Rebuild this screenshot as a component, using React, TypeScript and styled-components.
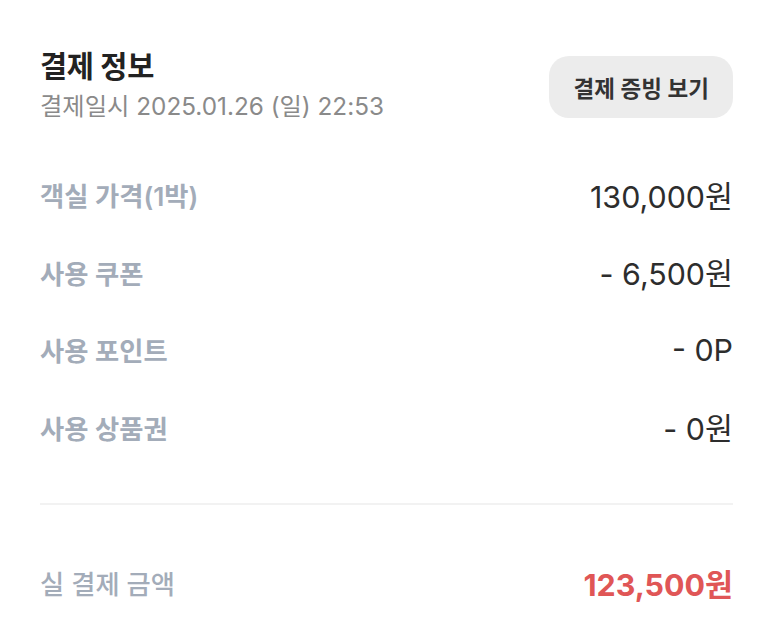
import React from "react";
import styled, { createGlobalStyle } from "styled-components";

const Global = createGlobalStyle`
  html, body { margin: 0; padding: 0; background: #ffffff; }
  body { font-family: "Inter", "Noto Sans CJK KR", sans-serif; -webkit-font-smoothing: antialiased; }
`;

const Page = styled.div`
  width: 773px;
  padding: 46px 40px 0 40px;
  box-sizing: border-box;
`;

const Header = styled.div`
  display: flex;
  align-items: flex-end;
  justify-content: space-between;
`;

const TitleBlock = styled.div`
  display: flex;
  flex-direction: column;
  gap: 5px;
`;

const Title = styled.h1`
  margin: 0;
  font-size: 29.5px;
  line-height: 40px;
  font-weight: 700;
  color: #222222;
  letter-spacing: -0.3px;
`;

const Sub = styled.div`
  font-size: 24.3px;
  line-height: 30px;
  color: #8a8a8a;
  font-weight: 400;
`;

const ProofButton = styled.button`
  height: 62px;
  margin-bottom: 3px;
  padding: 0 24px;
  border: none;
  border-radius: 20px;
  background: #ececec;
  color: #333333;
  font-family: inherit;
  font-size: 22.5px;
  font-weight: 600;
  cursor: pointer;
`;

const List = styled.div`
  display: flex;
  flex-direction: column;
  margin-top: 35px;
`;

const Row = styled.div`
  display: flex;
  align-items: center;
  justify-content: space-between;
  height: 77.5px;
`;

const Label = styled.span<{ $light?: boolean }>`
  font-size: 26.3px;
  font-weight: ${(p) => (p.$light ? 500 : 600)};
  color: #a3acb9;
`;

const Value = styled.span<{ $accent?: boolean }>`
  font-size: 30.4px;
  font-weight: ${(p) => (p.$accent ? 700 : 400)};
  color: ${(p) => (p.$accent ? "#e05656" : "#2d2d2d")};
`;

const Divider = styled.hr`
  border: none;
  height: 2px;
  background: #f2f2f2;
  margin: 37px 0 39px 0;
`;

const rows = [
  { label: "객실 가격(1박)", value: "130,000원" },
  { label: "사용 쿠폰", value: "- 6,500원" },
  { label: "사용 포인트", value: "- 0P" },
  { label: "사용 상품권", value: "- 0원" },
];

export default function App() {
  return (
    <Page>
      <Global />
      <Header>
        <TitleBlock>
          <Title>결제 정보</Title>
          <Sub>결제일시 2025.01.26 (일) 22:53</Sub>
        </TitleBlock>
        <ProofButton>결제 증빙 보기</ProofButton>
      </Header>
      <List>
        {rows.map((r) => (
          <Row key={r.label}>
            <Label>{r.label}</Label>
            <Value>{r.value}</Value>
          </Row>
        ))}
      </List>
      <Divider />
      <Row>
        <Label $light>실 결제 금액</Label>
        <Value $accent>123,500원</Value>
      </Row>
    </Page>
  );
}
